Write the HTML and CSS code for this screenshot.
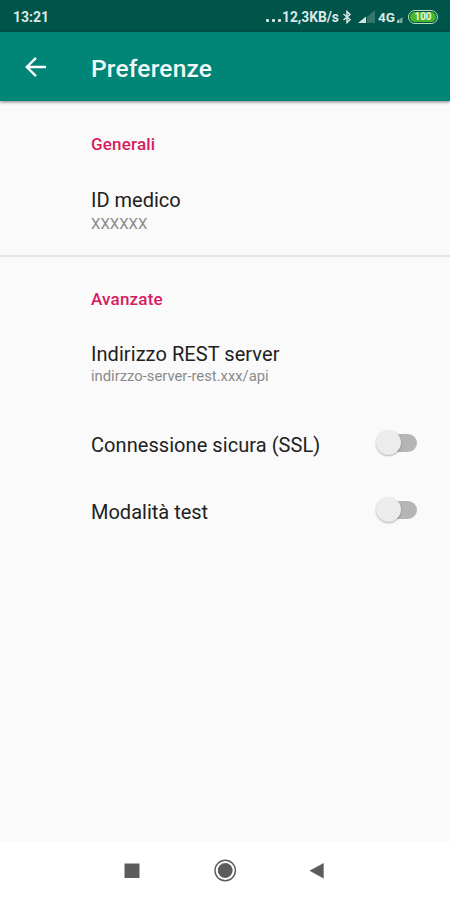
FILE: index.html
```html
<!DOCTYPE html>
<html lang="it">
<head>
<meta charset="utf-8">
<title>Preferenze</title>
<link rel="stylesheet" href="styles.css">
</head>
<body>
<div class="screen">
  <div class="status">
    <span class="clock">13:21</span>
    <div class="indicators">
      <span class="dots"><i></i><i></i><i></i></span>
      <span class="speed">12,3KB/s</span>
      <svg class="bluetooth" width="10" height="14" viewBox="0 0 10 14"><path d="M1.500 4 8 9.500 5 12.500V1.500L8 4.500 1.500 10" fill="none" stroke="#d5e5e2" stroke-width="1.500"/></svg>
      <svg class="signal" width="18" height="13" viewBox="0 0 18 13"><path d="M17 0v13H9V7z" fill="#34766d"/><path d="M8 6.500V13H0z" fill="#d5e5e2"/></svg>
      <span class="network">4G</span>
      <svg class="roam" width="6" height="6" viewBox="0 0 6 6"><path d="M0 6V3.500L2.500 2v4z" fill="#a5c5c0"/><path d="M3 6V2l2.500-2v6z" fill="#78a69f"/></svg>
      <span class="battery"><span class="level">100</span></span>
    </div>
  </div>
  <header class="toolbar">
    <svg class="back" width="22" height="22" viewBox="0 0 22 22"><path d="M21 11H2M11 1.800 1.800 11l9.200 9.200" fill="none" stroke="#fff" stroke-width="2.400"/></svg>
    <h1 class="title">Preferenze</h1>
  </header>
  <main class="content">
    <section class="group general">
      <h2 class="heading">Generali</h2>
      <div class="item">
        <div class="name">ID medico</div>
        <div class="summary">XXXXXX</div>
      </div>
    </section>
    <section class="group advanced">
      <h2 class="heading">Avanzate</h2>
      <div class="item">
        <div class="name spaced">Indirizzo REST server</div>
        <div class="summary address">indirzzo-server-rest.xxx/api</div>
      </div>
      <div class="toggle-row first">
        <span class="name spaced">Connessione sicura (SSL)</span>
        <span class="switch"><span class="thumb"></span></span>
      </div>
      <div class="toggle-row">
        <span class="name">Modalità test</span>
        <span class="switch"><span class="thumb"></span></span>
      </div>
    </section>
  </main>
  <nav class="navbar">
    <svg width="450" height="58" viewBox="0 1 450 58"><path d="M124.500 22.500h15v14.500h-15z" fill="#5c5c5c"/><circle cx="225.200" cy="29.500" r="10.200" fill="none" stroke="#5c5c5c" stroke-width="1.400"/><circle cx="225.200" cy="29.500" r="7.400" fill="#5c5c5c"/><path d="M309.500 29.700 323.700 22v15.500z" fill="#5c5c5c"/></svg>
  </nav>
</div>
</body>
</html>
```
FILE: styles.css
```css
body {
  margin: 0;
  font-family: Roboto, "Liberation Sans", sans-serif;
}

.screen {
  width: 450px;
  height: 900px;
  display: flex;
  flex-direction: column;
  background: #fafafa;
  overflow: hidden;
}

.status {
  height: 32px;
  flex: none;
  display: flex;
  justify-content: space-between;
  align-items: center;
  box-sizing: border-box;
  padding: 1px 12px 0 13px;
  background: #00554a;
  color: #dbe8e6;
  font-size: 14px;
  font-weight: 700;
}

.indicators {
  display: flex;
  align-items: center;
}

.dots {
  display: flex;
  gap: 2.5px;
  margin: 7px 1px 0 0;
}

.dots i {
  width: 3.5px;
  height: 3px;
  border-radius: 1px;
  background: #dbe8e6;
}

.speed {
  width: 57px;
  font-size: 13.8px;
}

.bluetooth {
  margin-left: 3px;
}

.signal {
  margin: 0 2px 0 6px;
}

.network {
  width: 18px;
  font-size: 13.5px;
}

.roam {
  margin: 6px 5px 0 1px;
}

.battery {
  width: 30px;
  height: 14px;
  box-sizing: border-box;
  padding: 1px;
  border: 1px solid #b9dfb8;
  border-radius: 7px;
}

.level {
  display: block;
  height: 10px;
  border-radius: 5px;
  background: #49b62b;
  color: #e9f7e4;
  font-size: 10px;
  line-height: 10.5px;
  text-align: center;
}

.toolbar {
  height: 69px;
  flex: none;
  display: flex;
  align-items: center;
  background: #008577;
  box-shadow: 0 1px 3px rgba(0, 0, 0, 0.5);
}

.back {
  margin: 0 44px 0 25px;
}

.title {
  margin: 4px 0 0;
  color: #f2f9f8;
  font-size: 24.5px;
  font-weight: 500;
  line-height: 30px;
  letter-spacing: 0.2px;
}

.content {
  flex: 1;
}

.group {
  box-sizing: border-box;
  padding-left: 91px;
}

.general {
  height: 156px;
  padding-top: 32px;
  border-bottom: 2px solid #e4e4e4;
}

.advanced {
  padding-top: 31px;
}

.heading {
  margin: 0 0 32px;
  color: #d81b60;
  font-size: 17px;
  font-weight: 500;
  line-height: 22px;
  letter-spacing: 0.2px;
}

.name {
  color: #212121;
  font-size: 20px;
  line-height: 26px;
}

.spaced {
  letter-spacing: 0.06px;
}

.summary {
  margin-top: 1px;
  color: #8a8a8a;
  font-size: 15px;
  line-height: 20px;
}

.address {
  margin-top: -1px;
  font-size: 14.8px;
}

.advanced .item {
  margin-top: -1px;
}

.toggle-row {
  height: 67px;
  display: flex;
  align-items: center;
  justify-content: space-between;
  padding-right: 33px;
}

.first {
  margin-top: 25px;
}

.switch {
  width: 37px;
  height: 18px;
  margin-bottom: 3px;
  border-radius: 9px;
  background: #b5b5b5;
  position: relative;
}

.thumb {
  position: absolute;
  left: -4px;
  top: -4px;
  width: 25px;
  height: 25px;
  border-radius: 50%;
  background: #ececec;
  box-shadow: 0 1px 2px rgba(0, 0, 0, 0.3);
}

.navbar {
  height: 58px;
  flex: none;
  background: #fff;
}

.navbar svg {
  display: block;
}
```
